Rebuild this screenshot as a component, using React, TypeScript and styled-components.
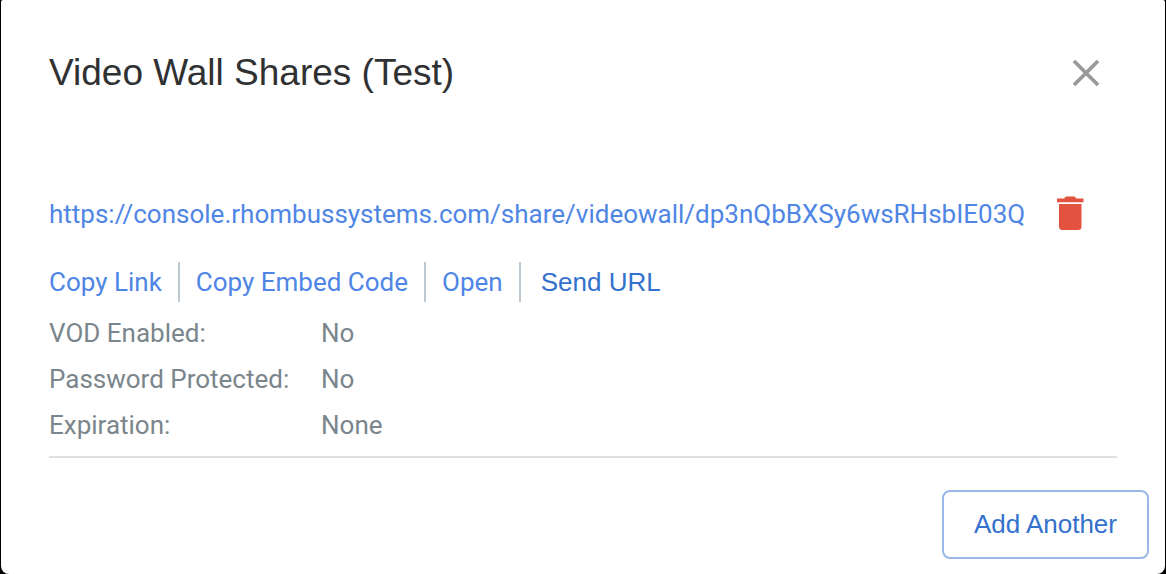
import React from "react";
import styled, { createGlobalStyle } from "styled-components";

const GlobalStyle = createGlobalStyle`
  *, *::before, *::after { box-sizing: border-box; }
  body {
    margin: 0;
    background: #000;
    font-family: Roboto, "Liberation Sans", sans-serif;
    font-size: 26px;
    line-height: 30px;
  }
`;

const Dialog = styled.section`
  min-height: 100vh;
  margin: 0 1px;
  padding-bottom: 15px;
  display: flex;
  flex-direction: column;
  background: #fff;
  border-radius: 2px 2px 8px 8px;
`;

const Header = styled.header`
  display: flex;
  align-items: center;
  justify-content: space-between;
  padding: 48px 61px 0 48px;
`;

const Title = styled.h1`
  margin: 0;
  font: 400 37px/50px "Liberation Sans", Arial, sans-serif;
  color: #2f3133;
`;

const IconButton = styled.button`
  display: flex;
  padding: 4px;
  border: 0;
  background: none;
  cursor: pointer;
`;

const Share = styled.article`
  margin: 92px 48px 0;
  padding-bottom: 8px;
  border-bottom: 2px solid #dfe0e0;
`;

const LinkRow = styled.div`
  display: flex;
  align-items: center;
  gap: 28px;
  height: 48px;
`;

const ShareLink = styled.a`
  color: #4f86e6;
  text-decoration: none;
  white-space: nowrap;
`;

const Actions = styled.div`
  display: flex;
  align-items: center;
  margin: 24px 0 8px;
`;

const Action = styled.button`
  height: 40px;
  padding: 0 16px;
  border: 0;
  border-right: 2px solid #bdc9d0;
  background: none;
  font: inherit;
  color: #4f86e6;
  cursor: pointer;

  &:first-child {
    padding-left: 0;
  }
`;

const SendAction = styled(Action)`
  border-right: 0;
  padding: 0 20px;
  font-family: "Liberation Sans", Arial, sans-serif;
  color: #3371cc;
`;

const Details = styled.dl`
  display: grid;
  grid-template-columns: 272px 1fr;
  margin: 0;
  line-height: 46px;
  color: #7a858c;
`;

const Label = styled.dt``;

const Value = styled.dd`
  margin: 0;
`;

const Footer = styled.footer`
  display: flex;
  justify-content: flex-end;
  padding: 32px 16px 0;
`;

const AddButton = styled.button`
  padding: 17px 30px;
  border: 2px solid #99b8e6;
  border-radius: 8px;
  background: #fff;
  font: 400 26px/31px "Liberation Sans", Arial, sans-serif;
  color: #3371cc;
  cursor: pointer;
`;

const url =
  "https://console.rhombussystems.com/share/videowall/dp3nQbBXSy6wsRHsbIE03Q";

const details = [
  ["VOD Enabled:", "No"],
  ["Password Protected:", "No"],
  ["Expiration:", "None"],
];

export default function App() {
  return (
    <>
      <GlobalStyle />
      <Dialog role="dialog" aria-labelledby="dialog-title">
        <Header>
          <Title id="dialog-title">Video Wall Shares (Test)</Title>
          <IconButton aria-label="Close">
            <svg width="28" height="28" viewBox="0 0 28 28" stroke="#999" strokeWidth="3.8">
              <path d="M2 2L26 26M26 2L2 26" />
            </svg>
          </IconButton>
        </Header>
        <Share>
          <LinkRow>
            <ShareLink href={url}>{url}</ShareLink>
            <IconButton aria-label="Delete share">
              <svg width="28" height="36" viewBox="0 0 28 36" fill="#e2523f">
                <path d="M0 2.5H7L9 0.5H17.5L19.5 2.5H26.5V6.3H0ZM2 8H24.5V30.5Q24.5 34 21 34H5.5Q2 34 2 30.5Z" />
              </svg>
            </IconButton>
          </LinkRow>
          <Actions>
            <Action>Copy Link</Action>
            <Action>Copy Embed Code</Action>
            <Action>Open</Action>
            <SendAction>Send URL</SendAction>
          </Actions>
          <Details>
            {details.map(([label, value]) => (
              <React.Fragment key={label}>
                <Label>{label}</Label>
                <Value>{value}</Value>
              </React.Fragment>
            ))}
          </Details>
        </Share>
        <Footer>
          <AddButton>Add Another</AddButton>
        </Footer>
      </Dialog>
    </>
  );
}
